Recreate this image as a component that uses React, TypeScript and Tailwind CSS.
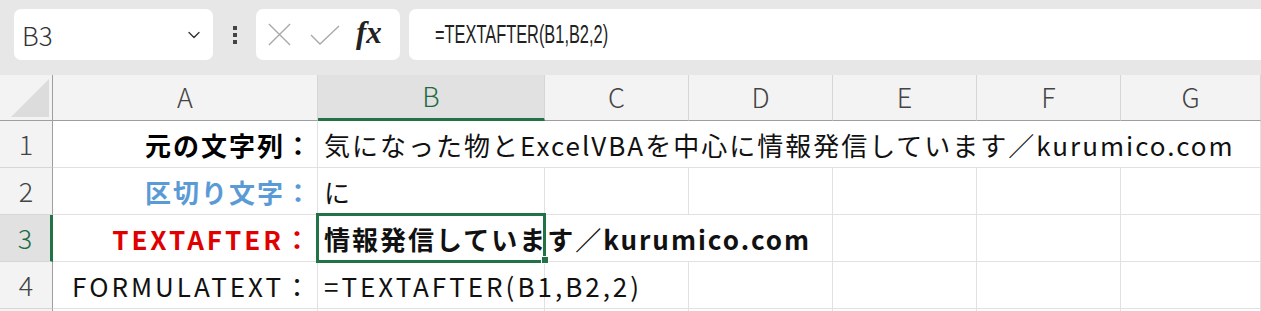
import React from "react";
import { ChevronDown } from "lucide-react";

const jp = "font-['Noto_Sans_CJK_JP','Noto_Sans',sans-serif]";
const cols = ["A", "B", "C", "D", "E", "F", "G"];
const txt = "text-[26px] tracking-[2px] whitespace-nowrap";

function Toolbar() {
  return (
    <div className="h-[75px] bg-[#e7e7e7] flex items-start pt-[9px] pl-[14px]">
      <div className="w-[199px] h-[51px] bg-white rounded-[7px] flex items-center justify-between pl-[8px] pr-[9px]">
        <span className={`text-[26px] font-light text-[#333] ${jp}`}>B3</span>
        <ChevronDown className="w-[20px] h-[20px] text-[#333]" strokeWidth={1.6} />
      </div>
      <div className="w-[43px] h-[51px] flex flex-col items-center justify-center gap-[3px]">
        <div className="w-[4px] h-[4px] bg-[#444]" />
        <div className="w-[4px] h-[4px] bg-[#444]" />
        <div className="w-[4px] h-[4px] bg-[#444]" />
      </div>
      <div className="w-[144px] h-[51px] bg-white rounded-[7px] flex items-center pl-[11px] gap-[18px]">
        <svg width="25" height="25" viewBox="0 0 26 26" fill="none" stroke="#a9a9a9" strokeWidth="1.4">
          <path d="M2 2 L24 24 M24 2 L2 24" />
        </svg>
        <svg width="30" height="22" viewBox="0 0 30 22" fill="none" stroke="#a9a9a9" strokeWidth="1.4">
          <path d="M1 11 L10 20 L29 2" />
        </svg>
        <span className="text-[31px] leading-none italic font-bold text-[#222] font-['Liberation_Serif',serif] -ml-[2px] -mt-[4px]">fx</span>
      </div>
      <div className="flex-1 ml-[9px] h-[51px] bg-white rounded-l-[7px] flex items-center pl-[26px]">
        <span className="text-[26px] text-[#222] font-['Liberation_Sans',sans-serif] scale-x-[0.63] origin-left inline-block">
          =TEXTAFTER(B1,B2,2)
        </span>
      </div>
    </div>
  );
}

function Header() {
  return (
    <div className="flex h-[46px] bg-[#f3f3f3]">
      <div className="w-[53px] border-r border-b border-[#9e9e9e] relative">
        <div className="absolute right-[3px] bottom-[3px] w-0 h-0 border-l-[38px] border-l-transparent border-b-[38px] border-b-[#dcdcdc]" />
      </div>
      {cols.map((c) => (
        <div
          key={c}
          className={`flex items-center justify-center border-r border-[#d6d6d6] text-[27px] font-light ${jp} ${
            c === "B"
              ? "bg-[#e1e1e1] text-[#1e6b40] border-b-[3px] border-b-[#217346]"
              : "text-[#444] border-b border-b-[#9e9e9e]"
          } ${
            c === "A"
              ? "w-[265px]"
              : c === "B"
              ? "w-[227px]"
              : c === "G"
              ? "w-[140px]"
              : "w-[144px]"
          }`}
        >
          {c}
        </div>
      ))}
    </div>
  );
}

function RowNum({ n, active }: { n?: number; active?: boolean }) {
  return (
    <div
      className={`w-[53px] shrink-0 flex items-center justify-center text-[27px] font-light ${jp} border-b border-[#d6d6d6] ${
        active
          ? "bg-[#e1e1e1] text-[#1e6b40] border-r-[3px] border-r-[#217346]"
          : "bg-[#f3f3f3] text-[#444] border-r border-r-[#9e9e9e]"
      }`}
    >
      {n}
    </div>
  );
}

function Cell({ w, children, className = "" }: { w: string; children?: React.ReactNode; className?: string }) {
  return (
    <div className={`${w} shrink-0 h-full border-r border-b border-[#e1e1e1] flex items-center ${className}`}>
      {children}
    </div>
  );
}

function Label({ children, className = "" }: { children: React.ReactNode; className?: string }) {
  return (
    <Cell w="w-[265px]" className={`justify-end pr-[4px] ${txt} ${className}`}>
      {children}
    </Cell>
  );
}

function Blank() {
  return (
    <>
      <Cell w="w-[144px]" />
      <Cell w="w-[144px]" />
      <Cell w="w-[144px]" />
      <Cell w="w-[144px]" />
      <Cell w="w-[140px]" />
    </>
  );
}

export default function App() {
  return (
    <div className={`w-[1261px] h-[311px] overflow-hidden bg-white ${jp}`}>
      <Toolbar />
      <Header />
      <div className="flex h-[47px]">
        <RowNum n={1} />
        <Label className="font-bold text-black">元の文字列：</Label>
        <Cell w="w-[943px]" className={`pl-[6px] text-[#111] ${txt} tracking-[2.3px]`}>
          気になった物とExcelVBAを中心に情報発信しています／kurumico.com
        </Cell>
      </div>
      <div className="flex h-[47px]">
        <RowNum n={2} />
        <Label className="font-bold text-[#5b9bd5]">区切り文字：</Label>
        <Cell w="w-[227px]" className={`pl-[6px] text-[#111] ${txt}`}>に</Cell>
        <Blank />
      </div>
      <div className="flex h-[47px]">
        <RowNum n={3} active />
        <Label className="font-bold text-[#e00000] tracking-[3px]">TEXTAFTER：</Label>
        <Cell w="w-[515px]" className={`pl-[6px] font-bold text-[#111] relative ${txt}`}>
          情報発信しています／kurumico.com
          <div className="absolute -left-[2px] -top-[2px] w-[230px] h-[50px] border-[3px] border-[#217346]" />
          <div className="absolute left-[223px] top-[41px] w-[8px] h-[8px] bg-[#217346] border border-white" />
        </Cell>
        <Cell w="w-[144px]" />
        <Cell w="w-[144px]" />
        <Cell w="w-[140px]" />
      </div>
      <div className="flex h-[47px]">
        <RowNum n={4} />
        <Label className="text-[#111] tracking-[3px]">FORMULATEXT：</Label>
        <Cell w="w-[227px]" className={`pl-[6px] text-[#111] ${txt} tracking-[3px]`}>
          =TEXTAFTER(B1,B2,2)
        </Cell>
        <Blank />
      </div>
      <div className="flex h-[47px]">
        <RowNum />
        <Cell w="w-[265px]" />
        <Cell w="w-[227px]" />
        <Blank />
      </div>
    </div>
  );
}
